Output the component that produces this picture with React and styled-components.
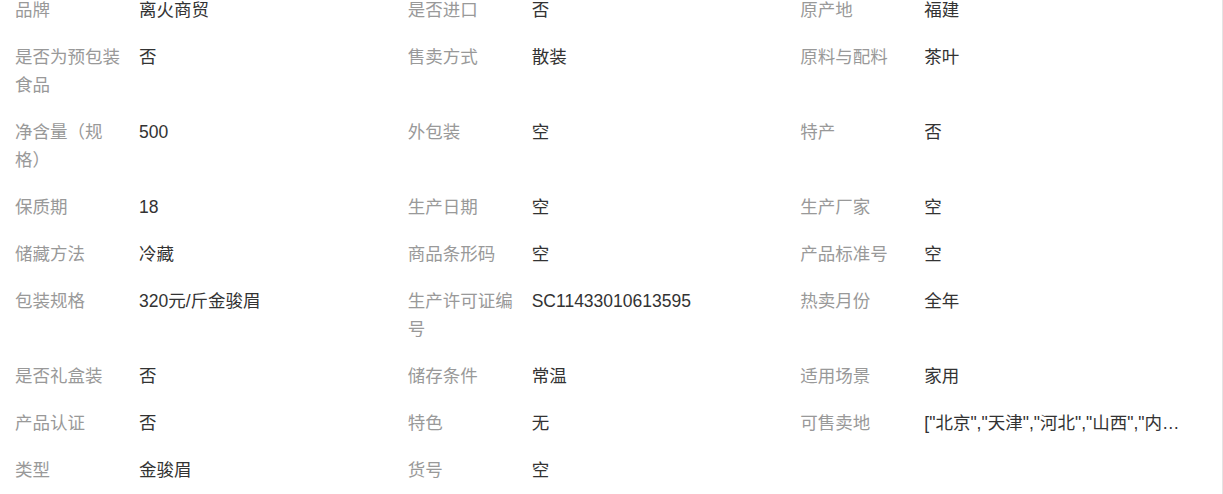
import React from "react";
import styled, { createGlobalStyle } from "styled-components";

const specs = [
  ["品牌", "离火商贸"],
  ["是否进口", "否"],
  ["原产地", "福建"],
  ["是否为预包装食品", "否"],
  ["售卖方式", "散装"],
  ["原料与配料", "茶叶"],
  ["净含量（规格）", "500"],
  ["外包装", "空"],
  ["特产", "否"],
  ["保质期", "18"],
  ["生产日期", "空"],
  ["生产厂家", "空"],
  ["储藏方法", "冷藏"],
  ["商品条形码", "空"],
  ["产品标准号", "空"],
  ["包装规格", "320元/斤金骏眉"],
  ["生产许可证编号", "SC11433010613595"],
  ["热卖月份", "全年"],
  ["是否礼盒装", "否"],
  ["储存条件", "常温"],
  ["适用场景", "家用"],
  ["产品认证", "否"],
  ["特色", "无"],
  [
    "可售卖地",
    '["北京","天津","河北","山西","内蒙古","辽宁","吉林","黑龙江"]',
  ],
  ["类型", "金骏眉"],
  ["货号", "空"],
];

function App() {
  return (
    <>
      <GlobalStyle />
      <Page>
        <SpecGrid>
          {specs.map(([label, value]) => (
            <Item key={label}>
              <Label>{label}</Label>
              <Value title={value}>{value}</Value>
            </Item>
          ))}
        </SpecGrid>
      </Page>
    </>
  );
}

export default App;

const GlobalStyle = createGlobalStyle`
  body {
    margin: 0;
    background: #fff;
    overflow: hidden;
    font-family: "Liberation Sans", "Noto Sans CJK SC", sans-serif;
  }
`;

const Page = styled.div`
  width: 1222px;
  height: 494px;
  border-right: 1px solid #e4e4e4;
  overflow: hidden;
`;

const SpecGrid = styled.div`
  display: grid;
  grid-template-columns: repeat(3, 1fr);
  margin-top: -4.5px;
  padding: 0 29px 0 15px;
`;

const Item = styled.div`
  display: flex;
  align-items: flex-start;
  padding-bottom: 19px;
  font-size: 17.5px;
  line-height: 28px;
  min-width: 0;
`;

const Label = styled.div`
  flex: 0 0 110px;
  margin-right: 14px;
  color: #999;
`;

const Value = styled.div`
  flex: 1;
  min-width: 0;
  padding-right: 10px;
  color: #333;
  white-space: nowrap;
  overflow: hidden;
  text-overflow: ellipsis;
`;
